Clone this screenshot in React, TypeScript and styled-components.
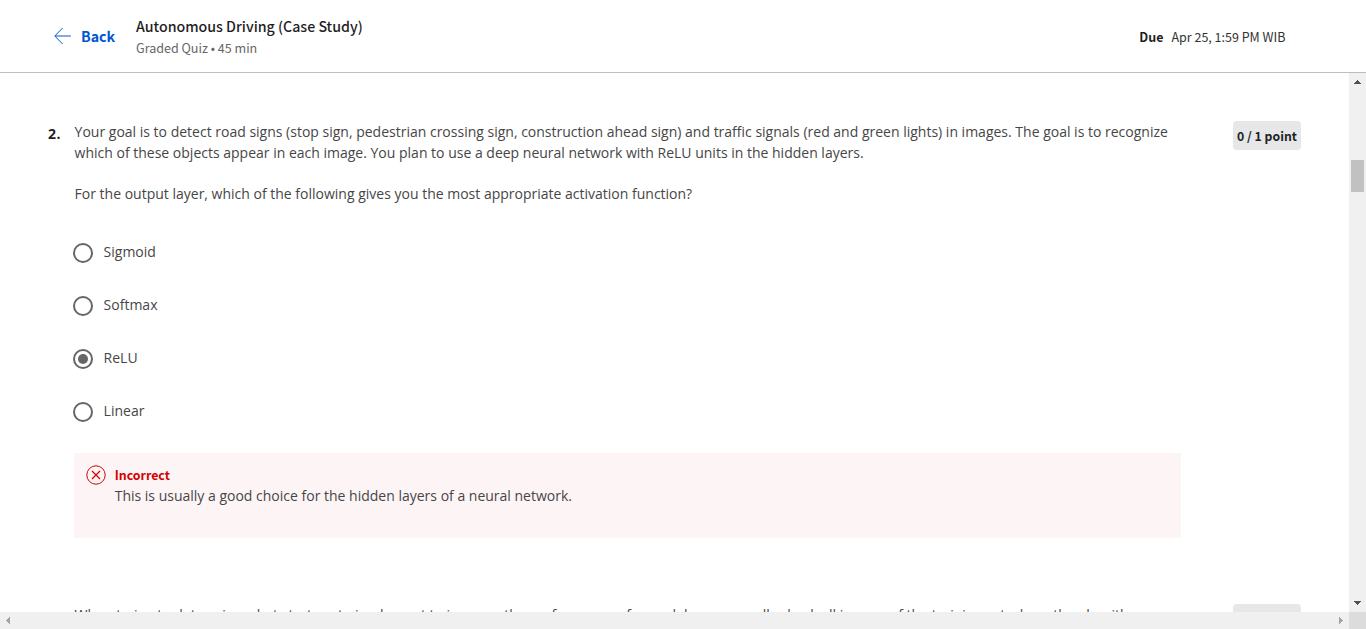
import React from 'react';
import styled, { createGlobalStyle } from 'styled-components';

const ui = '"Noto Sans CJK JP", "Noto Sans", sans-serif';
const body = '"Open Sans", "Noto Sans", sans-serif';

const Global = createGlobalStyle`
  *, *::before, *::after { box-sizing: border-box; }
  body { margin: 0; background: #fff; overflow: hidden; }
`;

const Page = styled.div`
  width: 100%;
  height: 100vh;
  display: grid;
  grid-template-columns: minmax(0, 1fr) 17px;
  grid-template-rows: 73px minmax(0, 1fr) 17px;
  overflow: hidden;
  color: #464646;
  font: 14px/21px ${body};
`;

const Header = styled.header`
  grid-column: 1 / -1;
  display: flex;
  align-items: flex-start;
  padding: 0 80.6px 0 54px;
  border-bottom: 1px solid #bdbdbd;
  font-family: ${ui};
  white-space: nowrap;
`;

const Back = styled.a`
  display: flex;
  width: 82px;
  padding-top: 26px;
  color: #0056d2;
  font-size: 14.2px;
  font-weight: 700;
  line-height: 20px;
  svg { margin: 1px 10px 0 0; }
`;

const Heading = styled.div`
  flex: 1;
  padding-top: 16px;
`;

const Title = styled.div`
  color: #1f1f1f;
  font-size: 14.2px;
  font-weight: 500;
  line-height: 20px;
`;

const Subtitle = styled.div`
  color: #666;
  font-size: 12.55px;
  line-height: 20px;
  margin-top: 2px;
`;

const Due = styled.div`
  display: flex;
  gap: 8px;
  padding-top: 27px;
  color: #333;
  font-size: 12.5px;
  line-height: 20px;
  b { color: #1f1f1f; }
`;

const Content = styled.main`
  overflow: hidden;
  padding: 48px 48px 0;
`;

const Question = styled.section`
  display: grid;
  grid-template-columns: 26px 1107px 1fr;
  height: 483px;
`;

const Number = styled.div`
  padding-top: 3px;
  color: #1f1f1f;
  font-size: 14px;
  font-weight: 700;
  line-height: 20px;
  letter-spacing: 0.4px;
`;

const Prompt = styled.p`
  margin: 0 0 20px;
  padding-left: 0.6px;
  line-height: 21px;
  white-space: nowrap;
`;

const Points = styled.div`
  justify-self: end;
  width: 68px;
  height: 29px;
  border-radius: 4px;
  background: #e5e7e8;
  color: #1f1f1f;
  font: 700 12.25px/31px ${ui};
  text-align: center;
  white-space: nowrap;
`;

const Options = styled.div`
  display: flex;
  flex-direction: column;
  gap: 33px;
  margin: 39px 0 0 -1px;
`;

const Option = styled.label`
  display: flex;
  height: 20px;
  gap: 10.6px;
  line-height: 18px;
`;

const Radio = styled.span<{ $checked?: boolean }>`
  display: grid;
  place-items: center;
  width: 20px;
  height: 20px;
  border: 2px solid #666;
  border-radius: 50%;
  &::after {
    content: '';
    width: 10px;
    height: 10px;
    border-radius: 50%;
    background: ${(p) => (p.$checked ? '#666' : 'transparent')};
  }
`;

const Feedback = styled.div`
  display: flex;
  gap: 8.7px;
  height: 85px;
  margin-top: 31px;
  padding: 12px;
  background: #fdf5f5;
  line-height: 21px;
`;

const Verdict = styled.div`
  color: #d30001;
  font: 700 12.35px/20px ${ui};
`;

const VerticalBar = styled.div`
  display: flex;
  flex-direction: column;
  align-items: center;
  background: #f0f0f0;
  svg { display: block; }
`;

const Thumb = styled.div`
  width: 13px;
  height: 32px;
  margin: 70px 0 auto;
  background: #c1c1c1;
`;

const HorizontalBar = styled.div`
  display: flex;
  justify-content: space-between;
  background: #f0f0f0;
`;

const Corner = styled.div`
  background: #dcdcdc;
`;

const Arrow = ({ d, color }: { d: string; color: string }) => (
  <svg width="17" height="17" viewBox="0 0 17 17" shapeRendering="crispEdges">
    <path d={d} fill={color} />
  </svg>
);

const answers = ['Sigmoid', 'Softmax', 'ReLU', 'Linear'];

export default function App() {
  return (
    <Page>
      <Global />
      <Header>
        <Back>
          <svg width="17" height="18" viewBox="0 0 17 18" fill="none" stroke="#0056d2" strokeWidth="1">
            <path d="M8.6 1 L0.8 9 L8.6 17 M1 9 H16.8" />
          </svg>
          Back
        </Back>
        <Heading>
          <Title>Autonomous Driving (Case Study)</Title>
          <Subtitle>Graded Quiz • 45 min</Subtitle>
        </Heading>
        <Due>
          <b>Due</b>
          <span>Apr 25, 1:59 PM WIB</span>
        </Due>
      </Header>
      <Content>
        <Question>
          <Number>2.</Number>
          <div>
            <Prompt>
              Your goal is to detect road signs (stop sign, pedestrian crossing sign, construction ahead sign) and traffic signals (red and green lights) in images. The goal is to recognize
              <br />
              which of these objects appear in each image. You plan to use a deep neural network with ReLU units in the hidden layers.
            </Prompt>
            <Prompt>For the output layer, which of the following gives you the most appropriate activation function?</Prompt>
            <Options>
              {answers.map((a) => (
                <Option key={a}>
                  <Radio $checked={a === 'ReLU'} />
                  {a}
                </Option>
              ))}
            </Options>
            <Feedback>
              <svg width="20" height="20" viewBox="0 0 20 20" fill="none" stroke="#d30001">
                <circle cx="10" cy="10" r="9.2" />
                <path d="M6 6 L14 14 M14 6 L6 14" strokeWidth="1.2" />
              </svg>
              <div>
                <Verdict>Incorrect</Verdict>
                This is usually a good choice for the hidden layers of a neural network.
              </div>
            </Feedback>
          </div>
          <Points>0 / 1 point</Points>
        </Question>
        <Question>
          <Number />
          <Prompt>
            When trying to determine what strategy to implement to improve the performance of a model, we manually check all images of the training set where the algorithm
          </Prompt>
          <Points />
        </Question>
      </Content>
      <VerticalBar>
        <Arrow color="#505050" d="M8 7h1v1h1v1h1v1h1v1h-7v-1h1v-1h1v-1h1z" />
        <Thumb />
        <Arrow color="#505050" d="M5 6h7v1h-1v1h-1v1h-1v1h-1v-1h-1v-1h-1v-1h-1z" />
      </VerticalBar>
      <HorizontalBar>
        <Arrow color="#a3a3a3" d="M6 8h1v-1h1v-1h1v-1h1v7h-1v-1h-1v-1h-1v-1h-1z" />
        <Arrow color="#a3a3a3" d="M7 5h1v1h1v1h1v1h1v1h-1v1h-1v1h-1v1h-1z" />
      </HorizontalBar>
      <Corner />
    </Page>
  );
}
